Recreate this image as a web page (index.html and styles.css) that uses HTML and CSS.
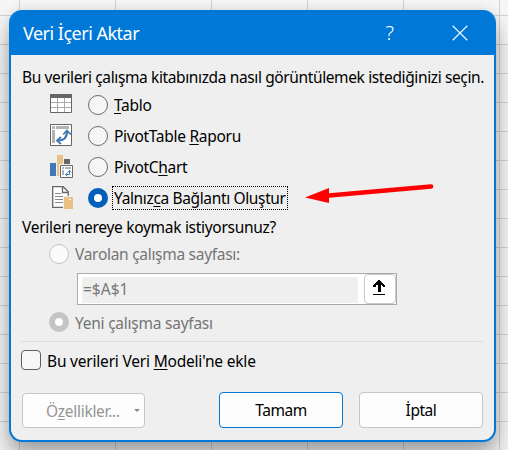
FILE: index.html
```html
<!DOCTYPE html>
<html lang="tr">
<head>
<meta charset="utf-8">
<title>Veri İçeri Aktar</title>
<link rel="stylesheet" href="styles.css">
</head>
<body>
<main class="dialog">
  <header class="titlebar">
    <h1 class="title">Veri İçeri Aktar</h1>
    <span class="help">?</span>
    <svg class="close" width="16" height="16" viewBox="0 0 16 16"><path d="M.7.7l14.6 14.6M15.3.7L.7 15.3" stroke="#e8f4ff" stroke-width="1.3" fill="none"/></svg>
  </header>
  <div class="content">
    <p class="prompt"><span class="t-prompt">Bu verileri çalışma kitabınızda nasıl görüntülemek istediğinizi seçin.</span></p>
    <div class="option">
      <svg class="icon" width="24" height="23" viewBox="0 0 24 23"><path d="M.5 2.500h21v17H.5z" fill="#fff" stroke="#666"/><path d="M0 1h22v4H0z" fill="#666"/><path d="M1 9.500h20M1 14.500h20M7.500 5v14M14.500 5v14" stroke="#aaa" fill="none"/></svg>
      <span class="radio"></span>
      <span class="label t-tablo"><u>T</u>ablo</span>
    </div>
    <div class="option">
      <svg class="icon" width="24" height="23" viewBox="0 0 24 23"><path d="M.5.5h21v21H.5z" fill="#fff" stroke="#666"/><path d="M2 2h3v3H2zM6 2h13v3H6zM2 6h3v13H2z" fill="#b3b3b3"/><path d="M8 16.500C13.500 16.500 17 14 17 8" fill="none" stroke="#3f78b5" stroke-width="2.200"/><path d="M13.200 10.500L17 6.500l3.800 4M11 13l-4 3.500 4 3.500" fill="none" stroke="#3f78b5" stroke-width="1.800"/></svg>
      <span class="radio"></span>
      <span class="label t-table">PivotTable <u>R</u>aporu</span>
    </div>
    <div class="option">
      <svg class="icon" width="24" height="23" viewBox="0 0 24 23"><path d="M0 8h6v13H0z" fill="#4179b5"/><path d="M7 0h6v21H7z" fill="#e8c282"/><path d="M14 4h6v5h-6z" fill="#666"/><path d="M9 9h14v13H9z" fill="#efefef"/><path d="M10.500 10.500h12v12h-12z" fill="#fff" stroke="#666"/><path d="M12 12h2v2h-2zM15 12h6v2h-6zM12 15h2v5h-2z" fill="#b3b3b3"/><path d="M15.500 19.500h4V16M17.500 17.700L15.500 19.500l2 1.800M17.700 17.500l1.800-2 1.800 2" fill="none" stroke="#4179b5"/></svg>
      <span class="radio"></span>
      <span class="label t-chart">PivotC<u>h</u>art</span>
    </div>
    <div class="option">
      <svg class="icon" width="24" height="23" viewBox="0 0 24 23"><path d="M2.700.7h10.500l5 5v15.600H2.700z" fill="#fff" stroke="#666" stroke-width="1.300"/><path d="M12.500 1v5.500H18" fill="none" stroke="#666" stroke-width="1.300"/><path d="M5 7.500h6M5 10.500h11M5 13.500h8M5 16.500h8" stroke="#888" fill="none"/><path d="M13 10h10v13H13z" fill="#efefef"/><path d="M14 11h9v12h-9z" fill="#e8c282"/><path d="M19 13.500h2" stroke="#fff"/></svg>
      <span class="radio checked"></span>
      <span class="label focused"><span class="t-link">Yalnız<u>c</u>a Bağlantı Oluştur</span></span>
      <svg class="arrow" width="132" height="24" viewBox="0 0 132 24"><path d="M24 13.500L126 4.500" stroke="#f00" stroke-width="4.700" stroke-linecap="round"/><path d="M0 15.500L24 6v15z" fill="#f00"/></svg>
    </div>
    <p class="where"><span class="t-where">Verileri nereye koymak istiyorsunuz?</span></p>
    <div class="place">
      <span class="radio disabled"></span>
      <span class="label t-existing">Varolan çalışma sayfası:</span>
    </div>
    <div class="reference">
      <span class="value">=$A$1</span>
      <span class="picker"><svg width="12" height="16" viewBox="0 0 12 16" shape-rendering="crispEdges"><path d="M5 0h2v1h1v1h1v1h1v1h1v1h1v2h-2V6H9V5H8v7H5V5H3v2H0V5h1V4h1V3h1V2h1V1h1zM0 14h12v1H0z"/></svg></span>
    </div>
    <div class="place second">
      <span class="radio disabled checked"></span>
      <span class="label t-new">Yeni çalışma sayfası</span>
    </div>
    <div class="divider"></div>
    <div class="model">
      <span class="checkbox"></span>
      <span class="label t-model">Bu verileri Veri <u>M</u>odeli'ne ekle</span>
    </div>
    <footer class="actions">
      <span class="button properties"><span class="t-props">Ö<u>z</u>ellikler...</span><i class="caret"></i></span>
      <span class="button primary"><span class="t-ok">Tamam</span></span>
      <span class="button"><span class="t-cancel">İptal</span></span>
    </footer>
  </div>
</main>
</body>
</html>
```
FILE: styles.css
```css
* { box-sizing: border-box; }
body {
  margin: 0;
  width: 508px;
  height: 450px;
  padding: 10px 12px 8px 9px;
  overflow: hidden;
  background-color: #f6f6f6;
  background-image:
    linear-gradient(90deg, #d2d2d2 1px, transparent 1px),
    linear-gradient(#d2d2d2 1px, transparent 1px);
  background-size: 96px 29px;
  background-position: 19px 15px;
  font: 15.5px/20px "Noto Sans", "Open Sans", sans-serif;
  color: #000;
}
.dialog {
  width: 487px;
  height: 432px;
  border: 2px solid #0078d7;
  border-top: 0;
  border-radius: 13px;
  background: #efefef;
  box-shadow: 0 16px 24px rgba(0, 0, 0, .32), 0 0 12px rgba(0, 0, 0, .1);
  white-space: nowrap;
}
.titlebar {
  display: flex;
  align-items: center;
  height: 45px;
  padding: 0 17px 0 12px;
  border-radius: 11px 11px 0 0;
  background: #0078d7;
  color: #fff;
}
.title { flex: 1; margin: 0; font-size: 18px; font-weight: 400; letter-spacing: -.5px; }
.help { margin-right: 58px; font-size: 20px; font-weight: 300; }
.close { margin-right: 9px; }
.content { padding: 12px 11px 0; }
.prompt, .where { display: flex; margin: 0; height: 20px; align-items: center; }
.prompt { margin-bottom: 2px; }
.option { display: flex; align-items: center; height: 31px; padding-left: 28px; }
.icon { display: block; margin-right: 14px; overflow: visible; }
.radio {
  flex: none;
  width: 20px;
  height: 20px;
  border: 1px solid #6a6a6a;
  border-radius: 50%;
  background: #f6f6f6;
}
.radio.checked { border: 6px solid #005fb8; background: #fff; }
.radio.disabled { border-color: #c4c4c4; background: #fafafa; }
.radio.disabled.checked { background: #fff; }
.label { margin-left: 6px; }
.label u, .button u { text-decoration-thickness: 1px; text-underline-offset: 2px; }
.focused {
  display: flex;
  align-items: center;
  width: 176px;
  height: 24px;
  margin-left: 4px;
  padding-left: 1px;
  border: 1px dotted #000;
}
.arrow { margin-left: 17px; margin-top: -7px; }
.where { margin-top: 4px; }
.place { display: flex; align-items: center; height: 20px; margin-top: 7px; padding-left: 27px; color: #757575; }
.reference {
  display: flex;
  justify-content: space-between;
  width: 320px;
  height: 32px;
  margin: 9px 0 0 55px;
  border: 1px solid #aaaaae;
  background: #fff;
}
.value {
  width: 276px;
  height: 26px;
  margin: 3px 0 0 4px;
  padding: 2px 0 0 1px;
  background: #efefef;
  color: #777;
}
.picker {
  display: flex;
  align-items: center;
  justify-content: center;
  width: 32px;
  height: 30px;
  border: 1px solid #c8c8c8;
  border-radius: 4px;
}
.picker svg { margin-top: -3px; margin-right: 2px; }
.place.second { margin-top: 7px; }
.place.second .label { padding-top: 2px; }
.divider { width: 462px; height: 1px; margin: 9px 0 0 -1px; background: #dcdcdc; }
.model { display: flex; align-items: center; height: 20px; margin-top: 8px; margin-left: -1px; }
.model .label { padding-top: 2px; }
.checkbox { width: 20px; height: 20px; border: 1px solid #5e5e5e; border-radius: 4px; background: #f6f6f6; }
.actions { display: flex; align-items: center; margin-top: 22px; }
.button {
  display: flex;
  align-items: center;
  justify-content: center;
  width: 124px;
  height: 36px;
  border: 1px solid #c6c6c6;
  border-radius: 4px;
  background: #fdfdfd;
}
.properties { justify-content: flex-start; width: 123px; height: 35px; margin: 1px 74px 0 0; padding-left: 23px; color: #959595; }
.caret { margin-left: 14px; border: 3px solid transparent; border-top-color: #8a8a8a; border-bottom: 0; }
.primary { margin-right: 16px; border-color: #0078d7; }
.t-prompt { letter-spacing: -.38px; }
.t-tablo, .t-table, .t-chart, .t-where, .t-existing, .t-props { letter-spacing: -.29px; }
.t-link { letter-spacing: -.36px; }
.t-new { letter-spacing: -.24px; }
.t-model { letter-spacing: -.2px; }
.t-ok, .t-cancel { letter-spacing: -.45px; }
```
